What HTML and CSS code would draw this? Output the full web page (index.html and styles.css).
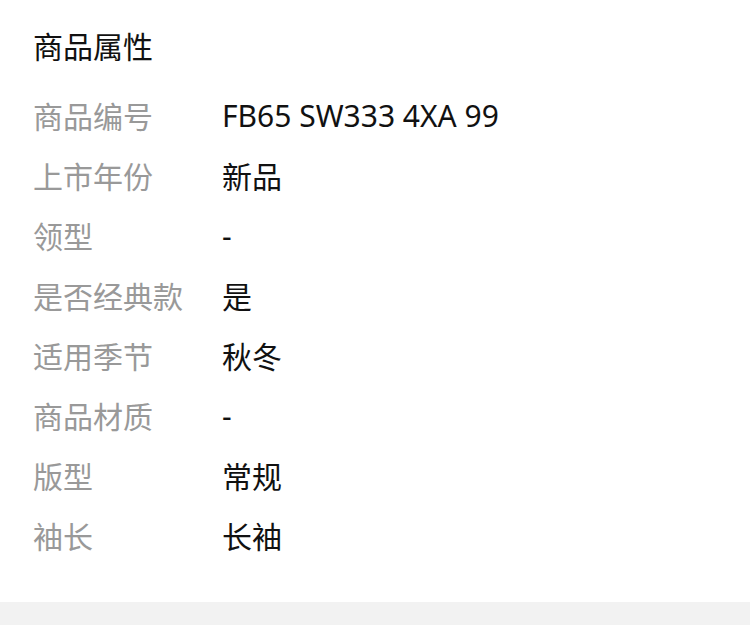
FILE: index.html
```html
<!DOCTYPE html>
<html lang="zh-CN">
  <head>
    <meta charset="utf-8" />
    <title>商品属性</title>
    <link rel="stylesheet" href="styles.css">
  </head>
  <body>
    <!-- Attributes panel -->
    <div class="attr-panel">
      <div class="attr-title">商品属性</div>
      <div class="attr-list">
        <div class="attr-row"><span class="attr-label">商品编号</span><span class="attr-value">FB65 SW333 4XA 99</span></div>
        <div class="attr-row"><span class="attr-label">上市年份</span><span class="attr-value">新品</span></div>
        <div class="attr-row"><span class="attr-label">领型</span><span class="attr-value">-</span></div>
        <div class="attr-row"><span class="attr-label">是否经典款</span><span class="attr-value">是</span></div>
        <div class="attr-row"><span class="attr-label">适用季节</span><span class="attr-value">秋冬</span></div>
        <div class="attr-row"><span class="attr-label">商品材质</span><span class="attr-value">-</span></div>
        <div class="attr-row"><span class="attr-label">版型</span><span class="attr-value">常规</span></div>
        <div class="attr-row"><span class="attr-label">袖长</span><span class="attr-value">长袖</span></div>
      </div>
    </div>
    <div class="page-footer"></div>
  </body>
</html>
```

FILE: styles.css
```css
body {
  margin: 0;
  background: #f2f2f2;
  font-family: 'Noto Sans', 'Noto Sans CJK SC', sans-serif;
  -webkit-font-smoothing: antialiased;
}

/* Attributes panel */
.attr-panel {
  background: #fff;
  padding: 17px 33px 37px;
}

.attr-title {
  font-size: 30px;
  line-height: 60px;
  color: #111;
  margin-bottom: 8px;
}

.attr-row {
  display: flex;
  align-items: center;
  height: 60px;
  font-size: 30px;
}

.attr-label {
  width: 189px;
  flex-shrink: 0;
  color: #999;
}

.attr-value {
  color: #111;
}

.page-footer {
  height: 40px;
}
```
